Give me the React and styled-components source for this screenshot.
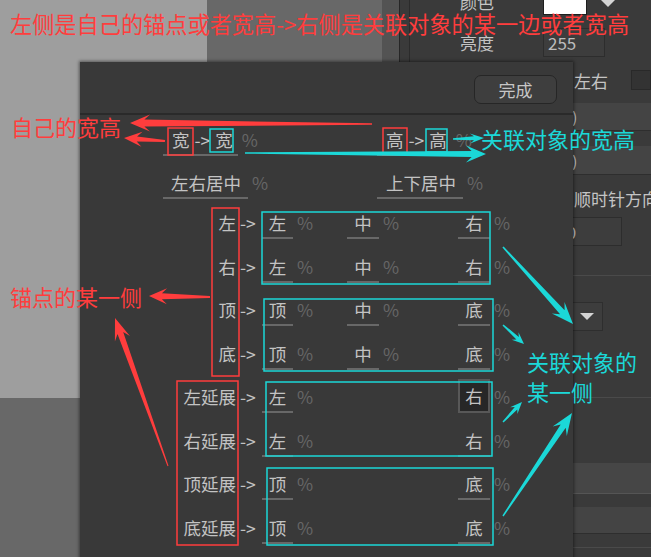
import React from "react";
import styled, { createGlobalStyle } from "styled-components";

const RED = "#ff3d3d";
const CYAN = "#1bd8d8";
const UI_FONT = `"Noto Sans CJK SC", "Noto Sans", sans-serif`;

const GlobalStyle = createGlobalStyle`
  html, body { margin: 0; padding: 0; }
  body {
    width: 651px;
    height: 557px;
    overflow: hidden;
    background: #3a3a3a;
    font-family: ${UI_FONT};
  }
`;

const Page = styled.div`
  position: relative;
  display: flex;
  width: 651px;
  height: 557px;
  overflow: hidden;
`;

/* ---------- scene + inspector behind the dialog ---------- */

const Scene = styled.div`
  width: 382px;
  background: #686868;
`;

const Preview = styled.div`
  width: 207px;
  height: 398px;
  background: #9e9e9e;
`;

const Splitter = styled.div`
  width: 17px;
  background: #535353;
  border-right: 1px solid #262626;
`;

const Inspector = styled.div`
  flex: 1;
  min-width: 0;
  overflow: hidden;
  background: #3a3a3a;
  padding-left: 9px;
`;

const InspectorBody = styled.div`
  height: 100%;
  border-left: 1px solid #2b2b2b;
  display: flex;
  flex-direction: column;
  color: #c4c4c4;
  font-size: 17px;
`;

const PropRow = styled.div`
  display: flex;
  align-items: center;
  flex: none;
  white-space: nowrap;
  height: ${(p) => p.$h}px;
  margin-top: ${(p) => p.$mt}px;
  padding-left: ${(p) => p.$pl || 0}px;
`;

const PropLabel = styled.span`
  width: 84px;
  text-align: right;
  margin-right: 49px;
  line-height: 1;
`;

const Spacer = styled.span`
  width: 133px;
  flex: none;
`;

const Swatch = styled.div`
  width: 44px;
  height: 28px;
  background: #ffffff;
  border: 1px solid #1e1e1e;
  box-sizing: border-box;
`;

const DownTriangle = styled.div`
  width: 0;
  height: 0;
  border-left: ${(p) => p.$w / 2}px solid transparent;
  border-right: ${(p) => p.$w / 2}px solid transparent;
  border-top: ${(p) => p.$h}px solid #d4d4d4;
`;

const SwatchArrow = styled.div`
  align-self: flex-start;
  margin: 12px 0 0 12px;
`;

const NumInput = styled.div`
  width: ${(p) => p.$w}px;
  height: 29px;
  box-sizing: border-box;
  background: #3d3d3d;
  border: 1px solid #2d2d2d;
  color: #bcbcbc;
  padding-left: 4px;
  display: flex;
  align-items: center;
`;

const CheckBox = styled.div`
  width: 20px;
  height: 20px;
  box-sizing: border-box;
  margin-left: 23px;
  background: #333333;
  border: 1px solid #292929;
`;

const Band = styled.div`
  flex: none;
  margin-left: 89px;
  height: ${(p) => p.$h}px;
  margin-top: ${(p) => p.$mt}px;
  background: ${(p) => p.$bg || "#444444"};
  border-bottom: 1px solid ${(p) => p.$line || "#2e2e2e"};
  box-sizing: border-box;
  padding-left: 44px;
  display: flex;
  align-items: center;
  font-size: 15px;
  color: #bdbdbd;
`;

const Separator = styled.div`
  flex: none;
  height: 1px;
  margin-top: ${(p) => p.$mt}px;
  background: #4a4a4a;
`;

const SelectBox = styled.div`
  margin-left: 89px;
  width: 104px;
  height: 29px;
  box-sizing: border-box;
  background: #3d3d3d;
  border: 1px solid #2e2e2e;
  display: flex;
  justify-content: flex-end;
  align-items: center;
  padding-right: 8px;
`;

/* ---------- the dialog ---------- */

const Dialog = styled.div`
  position: absolute;
  left: 80px;
  top: 62px;
  width: 493px;
  height: 520px;
  background: #393939;
  box-shadow: 0 0 3px 1px rgba(0, 0, 0, 0.45);
  display: flex;
  flex-direction: column;
  font-family: ${UI_FONT};
`;

const DialogHeader = styled.div`
  height: 53px;
  box-sizing: border-box;
  border-bottom: 2px solid #2a2a2a;
  display: flex;
  justify-content: flex-end;
  align-items: flex-start;
  padding: 13px 16px 0 0;
`;

const DoneButton = styled.button`
  width: 83px;
  height: 29px;
  border-radius: 7px;
  background: #3e3e3e;
  border: 1px solid #262626;
  color: #c6c6c6;
  font-family: ${UI_FONT};
  font-size: 17px;
  padding: 0;
`;

const DialogBody = styled.div`
  padding: 11px 0 0 83px;
  display: flex;
  flex-direction: column;
  font-size: 17.5px;
  color: #c3c3c3;
`;

const PairRow = styled.div`
  display: flex;
  height: 30px;
  margin-bottom: ${(p) => p.$mb}px;
`;

const PairCell = styled.div`
  width: ${(p) => p.$w || "auto"};
  display: flex;
`;

const Field = styled.div`
  height: 30px;
  box-sizing: border-box;
  border-bottom: 2px solid #686868;
  display: flex;
  align-items: center;
  justify-content: ${(p) => (p.$w ? "center" : "flex-start")};
  width: ${(p) => (p.$w ? `${p.$w}px` : "auto")};
  padding: 0 ${(p) => p.$pr || 0}px 0 ${(p) => p.$pl || 0}px;
  line-height: 28px;
  white-space: nowrap;
  ${(p) =>
    p.$active &&
    `
    margin-top: -4px;
    height: 34px;
    border: 2px solid #585858;
    background: #272727;
  `}
`;

const Pct = styled.span`
  color: #666666;
  margin-left: 4px;
  line-height: 28px;
`;

const Arrow = styled.span`
  margin: 0 5px 0 5px;
`;

const AnchorRow = styled.div`
  display: flex;
  height: 43.5px;
`;

const AnchorLabel = styled.div`
  width: 73px;
  text-align: right;
  line-height: 28px;
`;

const AnchorArrow = styled.div`
  width: 22px;
  padding-left: 4px;
  line-height: 28px;
`;

const Slot = styled.div`
  width: ${(p) => p.$w}px;
  display: flex;
`;

/* ---------- annotations on top ---------- */

const Overlay = styled.svg`
  position: absolute;
  left: 0;
  top: 0;
  width: 651px;
  height: 557px;
  pointer-events: none;
`;

const Note = styled.span`
  position: absolute;
  left: ${(p) => p.$x}px;
  top: ${(p) => p.$y}px;
  font-family: ${UI_FONT};
  font-size: ${(p) => p.$size || 22}px;
  line-height: 1;
  color: ${(p) => p.$color};
  white-space: nowrap;
`;

const arrowPoints = (x1, y1, x2, y2, tail, neck, headW, headL) => {
  const dx = x2 - x1;
  const dy = y2 - y1;
  const len = Math.hypot(dx, dy);
  const ux = dx / len;
  const uy = dy / len;
  const nx = -uy;
  const ny = ux;
  const p = (x, y) => `${x.toFixed(1)},${y.toFixed(1)}`;
  const bx = x2 - ux * headL;
  const by = y2 - uy * headL;
  const kx = x2 - ux * headL * 0.72;
  const ky = y2 - uy * headL * 0.72;
  return [
    p(x1 + (nx * tail) / 2, y1 + (ny * tail) / 2),
    p(kx + (nx * neck) / 2, ky + (ny * neck) / 2),
    p(bx + (nx * headW) / 2, by + (ny * headW) / 2),
    p(x2, y2),
    p(bx - (nx * headW) / 2, by - (ny * headW) / 2),
    p(kx - (nx * neck) / 2, ky - (ny * neck) / 2),
    p(x1 - (nx * tail) / 2, y1 - (ny * tail) / 2),
  ].join(" ");
};

const ARROWS = [
  { c: RED, a: [372, 124, 130, 123, 1.5, 7, 17, 20] },
  { c: RED, a: [165, 141, 124, 138, 2, 5, 15, 18] },
  { c: RED, a: [210, 297, 149, 296, 2, 6, 16, 18] },
  { c: RED, a: [168, 466, 115, 318, 1, 6, 16, 22] },
  { c: CYAN, a: [245, 153, 486, 154, 1.5, 6, 17, 20] },
  { c: CYAN, a: [453, 139, 484, 138, 1.5, 4, 10, 14] },
  { c: CYAN, a: [503, 247, 573, 324, 1.5, 6, 17, 22] },
  { c: CYAN, a: [503, 325, 524, 344, 1.5, 3.5, 10, 12] },
  { c: CYAN, a: [503, 422, 522, 402, 1.5, 3.5, 10, 12] },
  { c: CYAN, a: [503, 516, 572, 413, 1.5, 6, 17, 22] },
];

const BOXES = [
  { c: RED, r: [168, 128, 193, 155] },
  { c: CYAN, r: [210, 129, 233, 152] },
  { c: RED, r: [383, 128, 407, 155] },
  { c: CYAN, r: [426, 129, 447, 152] },
  { c: RED, r: [212, 208, 239, 376] },
  { c: RED, r: [177, 381, 238, 545] },
  { c: CYAN, r: [262, 212, 490, 284] },
  { c: CYAN, r: [264, 299, 493, 371] },
  { c: CYAN, r: [266, 382, 492, 456] },
  { c: CYAN, r: [267, 468, 493, 545] },
];

const SIDE_ROWS = [
  { label: "左", fields: ["左", "中", "右"] },
  { label: "右", fields: ["左", "中", "右"] },
  { label: "顶", fields: ["顶", "中", "底"] },
  { label: "底", fields: ["顶", "中", "底"] },
  { label: "左延展", fields: ["左", null, "右"], active: 2 },
  { label: "右延展", fields: ["左", null, "右"] },
  { label: "顶延展", fields: ["顶", null, "底"] },
  { label: "底延展", fields: ["顶", null, "底"] },
];

const SLOT_WIDTHS = [85, 111, 60];
const FIELD_WIDTHS = [31, 32, 32];

const App = () => {
  return (
    <>
      <GlobalStyle />
      <Page>
        <Scene>
          <Preview />
        </Scene>
        <Splitter />
        <Inspector>
          <InspectorBody>
            <PropRow $h={30} $mt={-14}>
              <PropLabel>颜色</PropLabel>
              <Swatch />
              <SwatchArrow>
                <DownTriangle $w={18} $h={9} />
              </SwatchArrow>
            </PropRow>
            <PropRow $h={29} $mt={12}>
              <PropLabel>亮度</PropLabel>
              <NumInput $w={62}>255</NumInput>
            </PropRow>
            <PropRow $h={26} $mt={10} $pl={164}>
              左右
              <CheckBox />
            </PropRow>
            <Band $h={28} $mt={10}>(0, 0)</Band>
            <Band $h={29} $mt={15}>(0, 0)</Band>
            <PropRow $h={22} $mt={12} $pl={164}>
              顺时针方向
            </PropRow>
            <PropRow $h={29} $mt={8}>
              <Spacer />
              <NumInput $w={79}>270</NumInput>
            </PropRow>
            <Separator $mt={29} />
            <PropRow $h={29} $mt={26}>
              <SelectBox>
                <DownTriangle $w={14} $h={7} />
              </SelectBox>
            </PropRow>
            <Separator $mt={66} />
            <Band $h={31} $mt={65} $bg="#464646" $line="#555555" />
            <Band $h={27} $mt={13} $line="#2e2e2e" />
            <Separator $mt={13} />
          </InspectorBody>
        </Inspector>

        <Dialog>
          <DialogHeader>
            <DoneButton>完成</DoneButton>
          </DialogHeader>
          <DialogBody>
            <PairRow $mb={13}>
              <PairCell $w="214px">
                <Field $pl={9} $pr={5}>
                  宽<Arrow>-&gt;</Arrow>宽
                </Field>
                <Pct>%</Pct>
              </PairCell>
              <PairCell>
                <Field $pl={9} $pr={5}>
                  高<Arrow>-&gt;</Arrow>高
                </Field>
                <Pct>%</Pct>
              </PairCell>
            </PairRow>
            <PairRow $mb={10}>
              <PairCell $w="214px">
                <Field $pl={8} $pr={7}>
                  左右居中
                </Field>
                <Pct>%</Pct>
              </PairCell>
              <PairCell>
                <Field $pl={9} $pr={7}>
                  上下居中
                </Field>
                <Pct>%</Pct>
              </PairCell>
            </PairRow>

            {SIDE_ROWS.map((row) => (
              <AnchorRow key={row.label}>
                <AnchorLabel>{row.label}</AnchorLabel>
                <AnchorArrow>-&gt;</AnchorArrow>
                {row.fields.map((f, i) => (
                  <Slot key={i} $w={SLOT_WIDTHS[i]}>
                    {f && (
                      <>
                        <Field $w={FIELD_WIDTHS[i]} $active={row.active === i}>
                          {f}
                        </Field>
                        <Pct>%</Pct>
                      </>
                    )}
                  </Slot>
                ))}
              </AnchorRow>
            ))}
          </DialogBody>
        </Dialog>

        <Overlay viewBox="0 0 651 557">
          {BOXES.map((b, i) => (
            <rect
              key={i}
              x={b.r[0]}
              y={b.r[1]}
              width={b.r[2] - b.r[0]}
              height={b.r[3] - b.r[1]}
              fill="none"
              stroke={b.c}
              strokeWidth="1.5"
            />
          ))}
          {ARROWS.map((a, i) => (
            <polygon key={i} points={arrowPoints(...a.a)} fill={a.c} />
          ))}
        </Overlay>

        <Note $x={10} $y={12} $size={22.2} $color={RED}>
          左侧是自己的锚点或者宽高-&gt;右侧是关联对象的某一边或者宽高
        </Note>
        <Note $x={11} $y={115} $color={RED}>
          自己的宽高
        </Note>
        <Note $x={481} $y={127} $color={CYAN}>
          关联对象的宽高
        </Note>
        <Note $x={10} $y={285} $color={RED}>
          锚点的某一侧
        </Note>
        <Note $x={527} $y={350} $color={CYAN}>
          关联对象的
        </Note>
        <Note $x={527} $y={380} $color={CYAN}>
          某一侧
        </Note>
      </Page>
    </>
  );
};

export default App;
